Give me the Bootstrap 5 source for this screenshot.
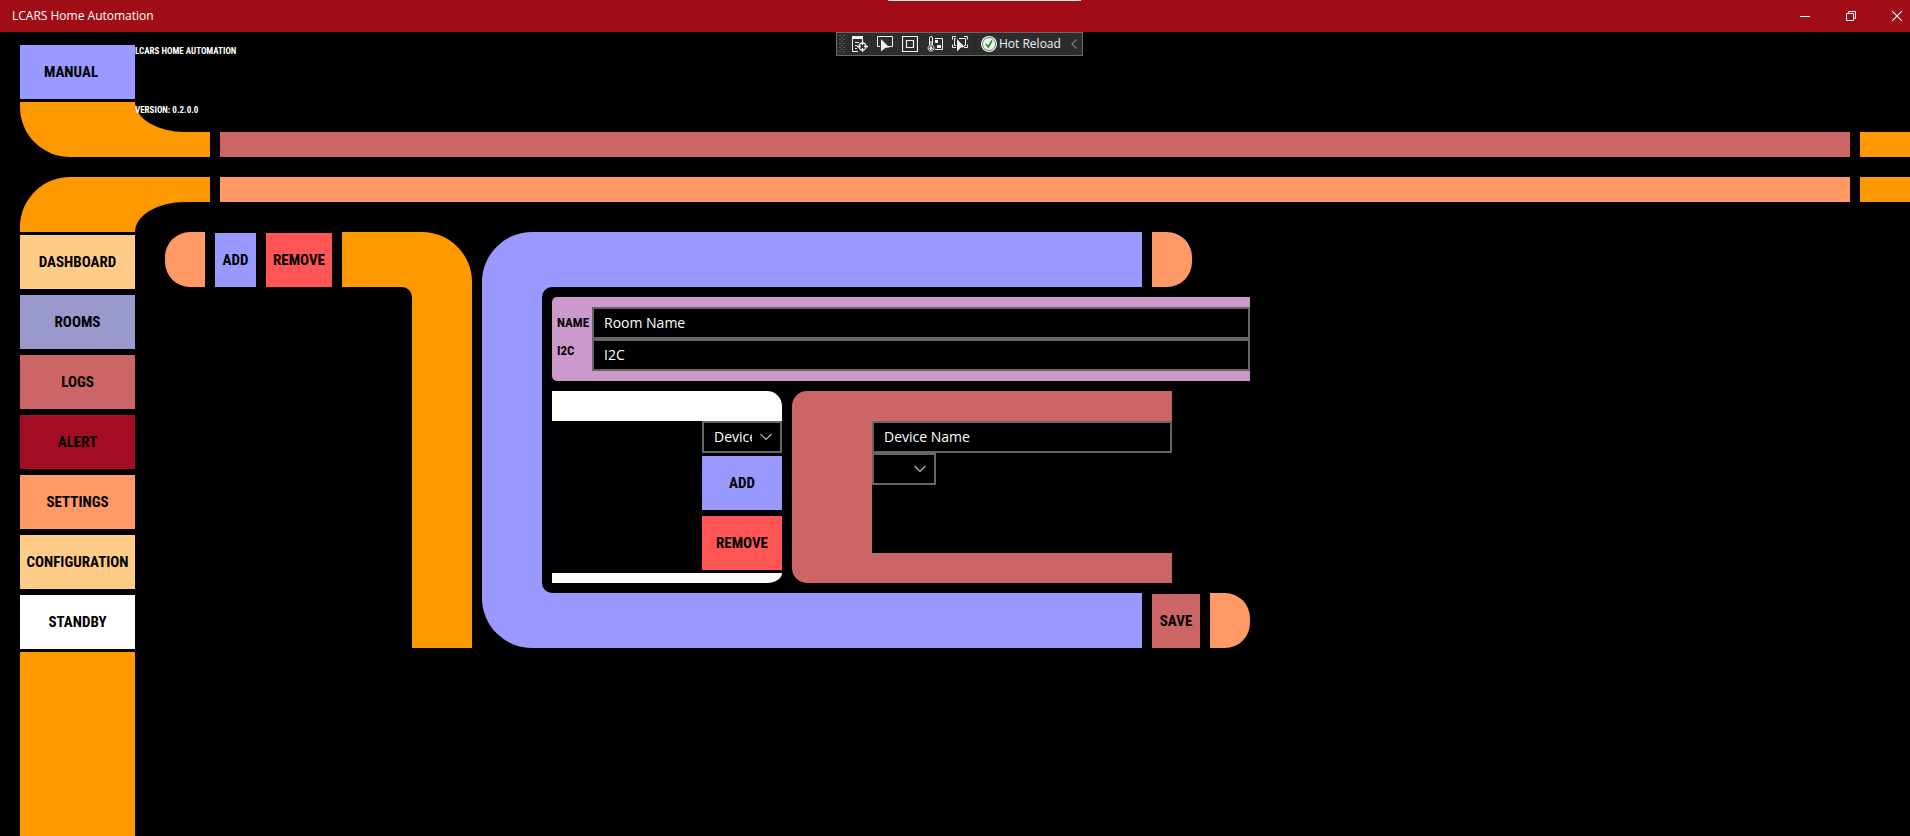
<!DOCTYPE html>
<html lang="en">
<head>
<meta charset="utf-8">
<meta name="viewport" content="width=device-width, initial-scale=1">
<title>LCARS Home Automation</title>
<link href="https://cdn.jsdelivr.net/npm/bootstrap@5.3.0/dist/css/bootstrap.min.css" rel="stylesheet">
<style>
  :root {
    --orange: #ff9900; --violet: #9999ff; --rose: #cc6666; --peach: #ff9966;
    --sand: #ffcc88; --steel: #9999cc; --pink: #cc99cc; --red: #ff5555; --crimson: #a20d24;
  }
  body { background: #000; color: #fff; font-family: "Open Sans", "Noto Sans", sans-serif; font-size: 14px; line-height: 20px; }
  button, input, select { border-radius: 0; }

  .window-title { height: 32px; background: #a10d17; font-size: 12px; padding-left: 12px; }
  .window-btn { width: 46px; height: 32px; border: 0; padding: 0; background: none; color: #fff; }
  .window-btn:last-child { width: 36px; padding-left: 10px; }
  .window-btn svg { display: block; margin: 0 auto; }
  .drag-line { top: 0; left: calc(50% - 67px); width: 193px; height: 1px; background: #e6e6e6; }
  .debug-bar { top: 32px; left: calc(50% - 119px); width: 247px; height: 24px; background: #2d2d30; border: 1px solid #686868; padding: 0 5px 0 2px; }
  .debug-bar button { border: 0; padding: 0; background: none; color: #f1f1f1; font-size: 12px; line-height: 20px; }
  .debug-bar svg { display: block; }
  .tool-set { gap: 9px; margin-left: 7px; }
  .tool-rule { width: 1px; height: 20px; background: #222225; margin: 0 6px; }
  .hot-reload { gap: 2px; }

  .bg-orange { background: var(--orange); } .bg-violet { background: var(--violet); }
  .bg-rose { background: var(--rose); } .bg-peach { background: var(--peach); }
  .bg-sand { background: var(--sand); } .bg-steel { background: var(--steel); }
  .bg-pinkish { background: var(--pink); } .bg-redish { background: var(--red); }
  .bg-crimson { background: var(--crimson); }

  .lcars-type { font-family: "Roboto Condensed", "Liberation Sans Narrow", "Liberation Sans", sans-serif; font-weight: 700; text-transform: uppercase; white-space: nowrap; }
  .lcars-btn { height: 54px; border: 0; padding: 0; color: #000; font-size: 15px; text-align: center; }
  .lcars-small { font-size: 9px; line-height: 12px; }

  .banner { padding: 13px 0 3px 20px; }
  .btn-manual { width: 115px; padding-right: 13px; }
  .sweep { padding-left: 20px; }
  .sweep-gap { margin-top: 20px; }
  .elbow { width: 190px; height: 55px; flex: none; }
  .elbow-down { border-bottom-left-radius: 50px; }
  .elbow-up { border-top-left-radius: 50px; }
  .notch { width: 75px; height: 30px; background: #000; margin-left: auto; padding-top: 2px; }
  .elbow-down .notch { border-bottom-left-radius: 50px 30px; }
  .elbow-up .notch { border-top-left-radius: 50px 30px; }
  .strip { height: 25px; }
  .strip-end { width: 50px; }
  .gap-10 { gap: 10px; }

  .side-menu { width: 115px; margin: 3px 0 0 20px; flex: none; }
  .side-items { gap: 6px; margin-bottom: 3px; }
  .workspace { padding-left: 30px; }
  .cap { width: 40px; height: 55px; flex: none; }
  .cap-left { border-radius: 25px 0 0 25px; }
  .cap-right { border-radius: 0 25px 25px 0; }
  .room-list { width: 307px; flex: none; }
  .room-list .lcars-btn { margin-top: 1px; }
  .room-elbow { border-top-right-radius: 50px; padding: 55px 60px 0 0; }
  .room-elbow div { background: #000; border-top-right-radius: 10px; }
  .btn-add { width: 41px; } .btn-remove { width: 66px; } .btn-save { width: 48px; }

  .editor { flex: 0 1 768px; }
  .frame-bar { height: 55px; }
  .frame-top { border-top-left-radius: 50px; }
  .frame-bottom { border-bottom-left-radius: 50px; }
  .editor-head { padding-right: 58px; }
  .editor-body { padding-left: 60px; }
  .editor-inner { background: #000; border-radius: 10px 0 0 10px; padding: 10px 0 10px 10px; }
  .room-form { border-radius: 5px 0 0 5px; padding: 10px 0 10px 5px; }
  .form-labels { width: 35px; padding-top: 2px; color: #000; font-size: 13px; line-height: 28px; }
  .field { height: 32px; border: 2px solid #666; background-color: #000; color: #fff; padding: 0 10px 2px; min-width: 0; }
  select.field { appearance: none; padding: 0 28px 0 10px; background-repeat: no-repeat; background-position: right 8px center;
    background-image: url("data:image/svg+xml,%3Csvg xmlns='http://www.w3.org/2000/svg' width='12' height='8'%3E%3Cpath d='M.5 1 6 6.500 11.500 1' fill='none' stroke='%23bbb' stroke-width='1.200'/%3E%3C/svg%3E"); }

  .device-panels { padding-right: 78px; }
  .device-list { width: 230px; flex: none; }
  .device-list-top { height: 30px; background: #fff; border-top-right-radius: 15px; }
  .device-list-base { height: 10px; background: #fff; border-bottom-right-radius: 15px 10px; }
  .device-tools { width: 80px; padding-bottom: 3px; }
  .device-tools select { margin-bottom: 3px; }
  .device-tools .lcars-btn + .lcars-btn { margin-top: 6px; }
  .device-form { border-radius: 15px 0 0 15px; padding: 30px 0 30px 80px; }
  .device-fields { background: #000; }
  .device-kind { width: 64px; }
</style>
</head>
<body class="d-flex flex-column min-vh-100 position-relative overflow-x-hidden">

<header class="window-title d-flex align-items-center">
  <span class="me-auto">LCARS Home Automation</span>
  <button class="window-btn" type="button" aria-label="Minimize"><svg width="10" height="10"><path d="M0 5.500h10" stroke="#fff"/></svg></button>
  <button class="window-btn" type="button" aria-label="Restore"><svg width="10" height="10" fill="none" stroke="#fff"><path d="M.5 2.500h7v7h-7zM2.500 2.500v-2h7v7h-2"/></svg></button>
  <button class="window-btn" type="button" aria-label="Close"><svg width="10" height="10"><path d="M0 0l10 10M10 0L0 10" stroke="#fff" stroke-width="1.100"/></svg></button>
</header>
<div class="drag-line position-absolute"></div>

<div class="debug-bar position-absolute d-flex align-items-center" role="toolbar" aria-label="Debug tools">
  <svg width="6" height="18" fill="#59595c"><path d="M0 0h2v1H0zM4 0h2v1H4zM2 2h2v1H2zM0 4h2v1H0zM4 4h2v1H4zM2 6h2v1H2zM0 8h2v1H0zM4 8h2v1H4zM2 10h2v1H2zM0 12h2v1H0zM4 12h2v1H4zM2 14h2v1H2zM0 16h2v1H0zM4 16h2v1H4z"/></svg>
  <div class="tool-set d-flex">
    <button type="button" aria-label="Live visual tree"><svg width="16" height="16" fill="none" stroke="#f1f1f1"><path d="M0 1.500h11" stroke-width="3"/><path d="M.5 3v12.500H6M10.500 3v2M3 6.500h4M3 9.500h2M3 12.500h2"/><circle cx="10.500" cy="10.500" r="3.500" stroke-width="1.300"/><path d="M10.500 5v4M10.500 12v4M5 10.500h4M12 10.500h4" stroke-width="1.300"/></svg></button>
    <button type="button" aria-label="Select element"><svg width="16" height="16"><path d="M3 10.500H.5v-10h15v10H11" fill="none" stroke="#f1f1f1"/><path d="M4 3l8.500 8.500-4 .3L4 15.500z" fill="#f1f1f1"/></svg></button>
    <button type="button" aria-label="Display layout adorners"><svg width="16" height="16" fill="none" stroke="#f1f1f1"><path d="M.5.5h15v15H.5zM4.500 4.500h7v7h-7z" stroke-width="1.200"/></svg></button>
    <button type="button" aria-label="Performance"><svg width="16" height="16" fill="none" stroke="#f1f1f1"><path d="M2.500 9.500V2a1.500 1.500 0 0 1 3 0v7.500a3 3 0 1 1-3 0zM4 5v7M8 2.500h7.500v11H8"/><circle cx="4" cy="12.300" r="1.200" fill="#f1f1f1"/><path d="M8 4h3v3H8zM10 9h4v3h-4z" fill="#f1f1f1" stroke="none"/></svg></button>
    <button type="button" aria-label="Track focused element"><svg width="16" height="16"><path d="M.5 3.500V.5H4M12 .5h3.500v3M15.500 8.500v3H12M4 11.500H.5v-3M4 2.500H2.500v7H4M7 2.500h6.500v7H12" fill="none" stroke="#f1f1f1"/><path d="M5 3l7.500 8-3.500.4L5 15.500z" fill="#f1f1f1"/></svg></button>
  </div>
  <div class="tool-rule"></div>
  <button class="hot-reload d-flex align-items-center text-nowrap" type="button"><svg width="16" height="16" fill="none"><circle cx="8" cy="8" r="8" fill="#f1f1f1"/><circle cx="8" cy="8" r="6.500" stroke="#4a9a4a"/><path d="M4.800 8l2.500 3L11 4.500" stroke="#2e8f2e" stroke-width="1.700"/></svg>Hot Reload</button>
  <button class="ms-auto" type="button" aria-label="Collapse"><svg width="6" height="10" fill="none" stroke="#77777a" stroke-width="1.300"><path d="M5.500.5L1 5l4.500 4.500"/></svg></button>
</div>

<div class="banner d-flex align-items-start">
  <button class="lcars-btn lcars-type btn-manual bg-violet" type="button">Manual</button>
  <span class="lcars-type lcars-small">LCARS Home Automation</span>
</div>
<div class="sweep d-flex gap-10 align-items-end">
  <div class="elbow elbow-down bg-orange"><div class="notch lcars-type lcars-small">Version: 0.2.0.0</div></div>
  <div class="strip flex-grow-1 bg-rose"></div>
  <div class="strip strip-end bg-orange"></div>
</div>
<div class="sweep sweep-gap d-flex gap-10 align-items-start">
  <div class="elbow elbow-up bg-orange d-flex align-items-end"><div class="notch"></div></div>
  <div class="strip flex-grow-1 bg-peach"></div>
  <div class="strip strip-end bg-orange"></div>
</div>

<div class="d-flex flex-grow-1">
  <nav class="side-menu d-flex flex-column">
    <div class="side-items d-flex flex-column">
      <button class="lcars-btn lcars-type bg-sand" type="button">Dashboard</button>
      <button class="lcars-btn lcars-type bg-steel" type="button">Rooms</button>
      <button class="lcars-btn lcars-type bg-rose" type="button">Logs</button>
      <button class="lcars-btn lcars-type bg-crimson" type="button">Alert</button>
      <button class="lcars-btn lcars-type bg-peach" type="button">Settings</button>
      <button class="lcars-btn lcars-type bg-sand" type="button">Configuration</button>
      <button class="lcars-btn lcars-type bg-white" type="button">Standby</button>
    </div>
    <div class="flex-grow-1 bg-orange"></div>
  </nav>

  <main class="workspace d-flex flex-grow-1 align-items-start">
    <div class="d-flex gap-10 flex-grow-1">
      <section class="room-list d-flex gap-10" aria-label="Rooms">
        <div class="cap cap-left bg-peach"></div>
        <button class="lcars-btn lcars-type btn-add bg-violet" type="button">Add</button>
        <button class="lcars-btn lcars-type btn-remove bg-redish" type="button">Remove</button>
        <div class="room-elbow bg-orange flex-grow-1 d-flex"><div class="flex-grow-1"></div></div>
      </section>

      <form class="editor">
        <div class="editor-head d-flex gap-10">
          <div class="frame-bar frame-top bg-violet flex-grow-1"></div>
          <div class="cap cap-right bg-peach"></div>
        </div>
        <div class="editor-body bg-violet">
          <div class="editor-inner d-flex flex-column gap-10">
            <div class="room-form bg-pinkish d-flex">
              <div class="form-labels lcars-type d-flex flex-column">
                <label for="room-name">Name</label>
                <label for="room-i2c">I2C</label>
              </div>
              <div class="d-flex flex-column flex-grow-1">
                <input class="field" id="room-name" type="text" value="Room Name">
                <input class="field" id="room-i2c" type="text" value="I2C">
              </div>
            </div>
            <div class="device-panels d-flex gap-10">
              <div class="device-list">
                <div class="device-list-top"></div>
                <div class="device-tools d-flex flex-column ms-auto">
                  <select class="field" aria-label="Device"><option>Device</option></select>
                  <button class="lcars-btn lcars-type bg-violet" type="button">Add</button>
                  <button class="lcars-btn lcars-type bg-redish" type="button">Remove</button>
                </div>
                <div class="device-list-base"></div>
              </div>
              <div class="device-form bg-rose flex-grow-1 d-flex">
                <div class="device-fields d-flex flex-column flex-grow-1">
                  <input class="field" type="text" aria-label="Device name" value="Device Name">
                  <select class="field device-kind" aria-label="Device kind"><option></option></select>
                </div>
              </div>
            </div>
          </div>
        </div>
        <div class="d-flex gap-10 align-items-end">
          <div class="frame-bar frame-bottom bg-violet flex-grow-1"></div>
          <button class="lcars-btn lcars-type btn-save bg-rose" type="submit">Save</button>
          <div class="cap cap-right bg-peach"></div>
        </div>
      </form>
    </div>
  </main>
</div>
<script src="https://cdn.jsdelivr.net/npm/bootstrap@5.3.0/dist/js/bootstrap.bundle.min.js"></script>
</body>
</html>
